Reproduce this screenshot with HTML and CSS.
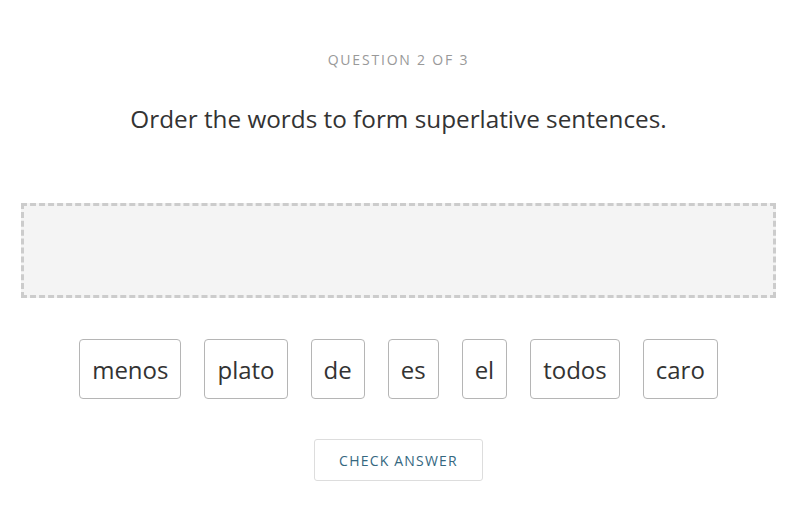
FILE: index.html
```html
<!DOCTYPE html>
<html lang="en">
<head>
  <meta charset="utf-8" />
  <title>Question 2 of 3</title>
  <link rel="stylesheet" href="styles.css">
</head>
<body>

<div class="quiz">
  <div class="quiz-count">QUESTION 2 OF 3</div>
  <h1 class="quiz-prompt">Order the words to form superlative sentences.</h1>

  <div class="drop-zone"></div>

  <div class="word-bank">
    <button type="button" class="word">menos</button>
    <button type="button" class="word">plato</button>
    <button type="button" class="word">de</button>
    <button type="button" class="word">es</button>
    <button type="button" class="word">el</button>
    <button type="button" class="word">todos</button>
    <button type="button" class="word">caro</button>
  </div>

  <div class="actions">
    <button type="button" class="check">CHECK ANSWER</button>
  </div>
</div>

</body>
</html>
```

FILE: styles.css
```css
body {
  font-family: "Open Sans", "Liberation Sans", sans-serif;
  margin: 0;
  background-color: #ffffff;
  color: #333333;
}

.quiz {
  margin: 0 24px 0 21px;
  padding-top: 51px;
  text-align: center;
}

.quiz-count {
  font-size: 14px;
  line-height: 18px;
  letter-spacing: 1.8px;
  color: #999999;
}

.quiz-prompt {
  margin: 34px 0 0;
  font-size: 24.3px;
  font-weight: normal;
  line-height: 32px;
  color: #333333;
}

.drop-zone {
  margin-top: 68px;
  height: 89px;
  border: 3px dashed #cccccc;
  background-color: #f4f4f4;
}

.word-bank {
  display: flex;
  justify-content: center;
  gap: 23px;
  margin-top: 41px;
}

.word {
  height: 60px;
  padding: 0 12px;
  font-family: inherit;
  font-size: 24px;
  color: #333333;
  background-color: #ffffff;
  border: 1px solid #b5b5b5;
  border-radius: 4px;
  cursor: pointer;
}

.actions {
  margin-top: 40px;
}

.check {
  width: 169px;
  height: 42px;
  font-family: inherit;
  font-size: 14px;
  letter-spacing: 1.2px;
  color: #35677f;
  background-color: #ffffff;
  border: 1px solid #dddddd;
  border-radius: 3px;
  cursor: pointer;
}
```
